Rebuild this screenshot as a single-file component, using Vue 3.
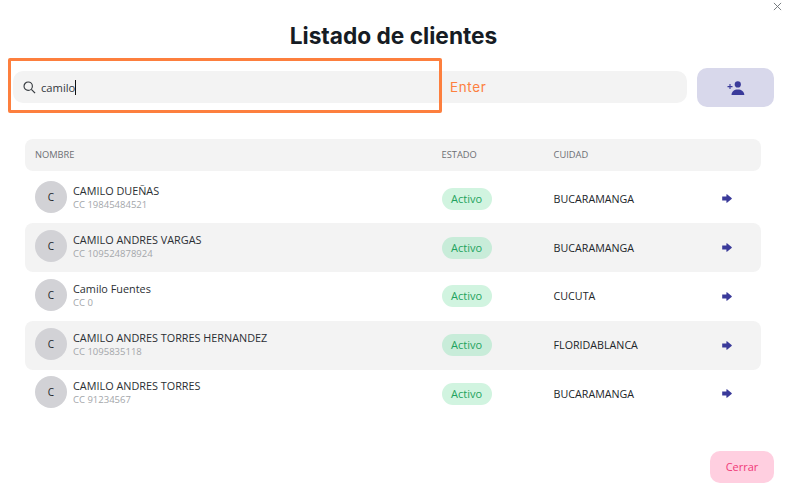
<script setup>
const clients = [
  { name: 'CAMILO DUEÑAS', doc: 'CC 19845484521', city: 'BUCARAMANGA' },
  { name: 'CAMILO ANDRES VARGAS', doc: 'CC 109524878924', city: 'BUCARAMANGA' },
  { name: 'Camilo Fuentes', doc: 'CC 0', city: 'CUCUTA' },
  { name: 'CAMILO ANDRES TORRES HERNANDEZ', doc: 'CC 1095835118', city: 'FLORIDABLANCA' },
  { name: 'CAMILO ANDRES TORRES', doc: 'CC 91234567', city: 'BUCARAMANGA' },
]
</script>

<template>
  <div class="modal">
    <svg class="close" viewBox="0 0 10 10" width="9" height="9">
      <path d="M1 1L9 9M9 1L1 9" stroke="#6b7075" stroke-width="1" fill="none" />
    </svg>
    <h1 class="title">Listado de clientes</h1>

    <div class="search-row">
      <div class="search">
        <svg class="lens" viewBox="0 0 14 14" width="13" height="13">
          <circle cx="5.6" cy="5.6" r="4.5" stroke="#33383d" stroke-width="1.2" fill="none" />
          <path d="M9 9L13 13" stroke="#33383d" stroke-width="1.3" fill="none" />
        </svg>
        <span class="query">camilo</span><span class="caret"></span>
        <span class="enter">Enter</span>
      </div>
      <button class="add">
        <svg viewBox="0 0 18 14" width="18" height="14">
          <circle cx="10.8" cy="3.4" r="3.1" fill="#3a3a9a" />
          <path d="M4.5 14c0-3.6 2.8-5.6 6.3-5.6s6.5 2 6.5 5.6z" fill="#3a3a9a" />
          <path d="M0.5 5.6h5M3 3.1v5" stroke="#3a3a9a" stroke-width="1.1" fill="none" />
        </svg>
      </button>
      <div class="highlight"></div>
    </div>

    <div class="table">
      <div class="row head">
        <span>NOMBRE</span>
        <span>ESTADO</span>
        <span>CUIDAD</span>
        <span></span>
      </div>
      <div v-for="c in clients" :key="c.doc" class="row item">
        <div class="who">
          <div class="avatar">C</div>
          <div class="names">
            <div class="name">{{ c.name }}</div>
            <div class="doc">{{ c.doc }}</div>
          </div>
        </div>
        <div><span class="badge">Activo</span></div>
        <div class="city">{{ c.city }}</div>
        <svg class="arrow" viewBox="0 0 10 9" width="10" height="9">
          <path d="M0.2 2.4h4.2V0.6c0-.4.3-.5.6-.3L9.6 3.9c.4.3.4.9 0 1.2L5 8.7c-.3.2-.6.1-.6-.3V6.6H0.2z" fill="#3a3a9a" />
        </svg>
      </div>
    </div>

    <div class="foot">
      <button class="cerrar">Cerrar</button>
    </div>
  </div>
</template>

<style scoped>
.modal {
  position: relative;
  width: 791px;
  height: 489px;
  box-sizing: border-box;
  padding: 19px 17px 6px 13px;
  background: #fff;
  font-family: "Open Sans", "Noto Sans", sans-serif;
  color: #212529;
  overflow: hidden;
}
.close {
  position: absolute;
  top: 2px;
  right: 9px;
}
.title {
  margin: 0;
  height: 32px;
  line-height: 32px;
  padding-top: 1px;
  text-align: center;
  font-family: Inter, sans-serif;
  font-size: 22.7px;
  font-weight: 700;
  color: #161c24;
}
.search-row {
  position: relative;
  display: flex;
  align-items: flex-start;
  gap: 10px;
  margin-top: 16px;
}
.search {
  flex: 1;
  height: 32px;
  margin-top: 3px;
  display: flex;
  align-items: center;
  padding-left: 10px;
  background: #f3f3f3;
  border-radius: 10px;
  font-size: 11.2px;
  position: relative;
}
.lens {
  margin-right: 5px;
}
.query {
  color: #33383d;
}
.caret {
  width: 1px;
  height: 15px;
  background: #111;
}
.enter {
  position: absolute;
  left: 437px;
  top: 8px;
  font-family: Inter, sans-serif;
  font-size: 13.5px;
  line-height: 17px;
  letter-spacing: 0.6px;
  color: #fd8040;
}
.add {
  width: 77px;
  height: 39px;
  padding: 0;
  border: 0;
  border-radius: 10px;
  background: #d8d8eb;
  display: flex;
  align-items: center;
  justify-content: center;
}
.highlight {
  position: absolute;
  left: -5px;
  top: -10px;
  width: 434px;
  height: 55px;
  box-sizing: border-box;
  border: 3px solid #fd7f3e;
  border-radius: 2px;
}
.table {
  margin: 32px 13px 0 12px;
}
.row {
  display: grid;
  grid-template-columns: 406.6px 112px 168px 49px;
  align-items: center;
  padding-left: 10px;
  border-radius: 8px;
}
.head {
  height: 32px;
  margin-bottom: 3.4px;
  background: #f3f3f3;
  font-size: 9.3px;
  color: #6d6f73;
  padding-bottom: 2px;
  box-sizing: border-box;
}
.item {
  height: 48.8px;
  font-size: 11px;
}
.item:nth-child(odd) {
  background: #f3f3f3;
}
.who {
  display: flex;
  align-items: center;
  gap: 6px;
  margin-top: -3px;
}
.avatar {
  width: 32px;
  height: 32px;
  border-radius: 50%;
  background: #d2d2d6;
  display: flex;
  align-items: center;
  justify-content: center;
  font-size: 10px;
  color: #212529;
}
.names {
  padding-top: 1px;
}
.name {
  font-size: 10.85px;
  line-height: 15px;
  color: #2b2f33;
}
.doc {
  font-size: 9.5px;
  line-height: 14px;
  color: #a3a6aa;
}
.badge {
  display: inline-block;
  width: 50px;
  height: 22px;
  line-height: 22px;
  text-align: center;
  border-radius: 11px;
  background: #d1f4e0;
  color: #1ea35d;
  font-size: 11px;
}
.item:nth-child(odd) .badge {
  background: #c8ecd9;
}
.city {
  font-size: 10.7px;
  color: #212529;
}
.foot {
  display: flex;
  justify-content: flex-end;
  margin-top: 32.6px;
}
.cerrar {
  width: 64px;
  height: 32px;
  padding: 0;
  border: 0;
  border-radius: 10px;
  background: #ffcfe0;
  color: #f03a78;
  font-family: inherit;
  font-size: 11px;
}
</style>

<style>
html, body { margin: 0; background: #fff; }
</style>
